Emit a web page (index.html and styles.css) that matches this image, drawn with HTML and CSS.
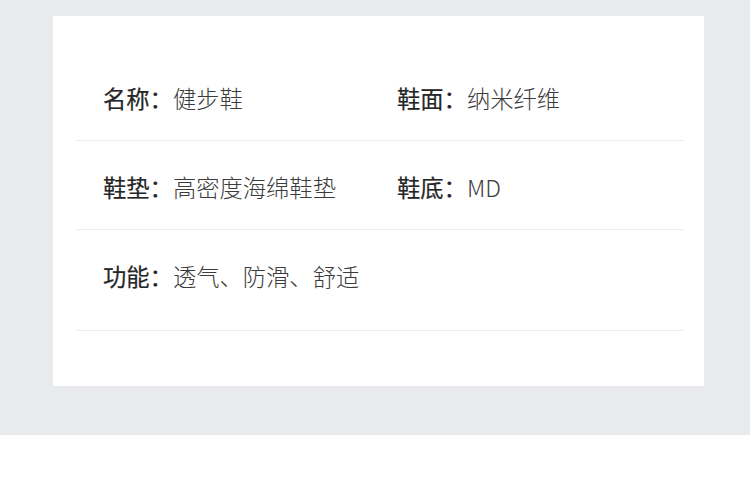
FILE: index.html
```html
<!DOCTYPE html>
<html lang="zh-CN">
<head>
<meta charset="utf-8">
<title>产品参数</title>
<link rel="stylesheet" href="styles.css">
</head>
<body>
<section class="stage">
  <div class="card">
    <div class="row">
      <div class="item"><span class="label">名称：</span><span class="value">健步鞋</span></div>
      <div class="item"><span class="label">鞋面：</span><span class="value">纳米纤维</span></div>
    </div>
    <div class="row">
      <div class="item"><span class="label">鞋垫：</span><span class="value">高密度海绵鞋垫</span></div>
      <div class="item"><span class="label">鞋底：</span><span class="value">MD</span></div>
    </div>
    <div class="row row-last">
      <div class="item"><span class="label">功能：</span><span class="value">透气、防滑、舒适</span></div>
    </div>
  </div>
</section>
</body>
</html>
```
FILE: styles.css
```css
* { box-sizing: border-box; }
html, body { margin: 0; padding: 0; background: #ffffff; }
body {
  font-family: "Noto Sans CJK SC", "Noto Sans", sans-serif;
  width: 750px;
  height: 480px;
  overflow: hidden;
}
.stage {
  background: #e9eaee;
  height: 435px;
  padding: 16px 46px 0 53px;
}
.card {
  background: #ffffff;
  height: 370px;
  padding: 36px 20px 0 23px;
}
.row {
  display: grid;
  grid-template-columns: 294px 1fr;
  padding: 30px 0 25px 27px;
  border-bottom: 1px solid #ececee;
}
.row-last { padding-bottom: 37px; }
.item {
  font-size: 23.3px;
  line-height: 33px;
  white-space: nowrap;
}
.label {
  color: #262626;
  font-weight: 400;
  -webkit-text-stroke: 0.2px #262626;
}
.value { color: #3c3c3c; font-weight: 300; }
```
